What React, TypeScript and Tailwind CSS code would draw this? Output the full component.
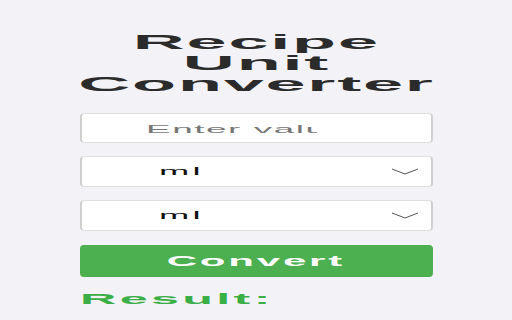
import React from "react";

const font = { fontFamily: '"Liberation Sans", Arial, sans-serif' };

function Chevron() {
  return (
    <svg width="28" height="7" viewBox="0 0 28 7" className="shrink-0">
      <path d="M1 1 L14 6 L27 1" fill="none" stroke="#555" strokeWidth="1" />
    </svg>
  );
}

function UnitSelect({ value }: { value: string }) {
  return (
    <div className="flex h-[31px] items-center justify-between rounded-[4px] border-x-2 border-y border-x-[#cfcfcf] border-y-[#dedede] bg-white pl-[77px] pr-[12px]">
      <span className="inline-block origin-left scale-x-[3.3] text-[11px] leading-none tracking-[1px] text-[#111]">
        {value}
      </span>
      <Chevron />
    </div>
  );
}

export default function App() {
  return (
    <div className="min-h-[320px] w-full bg-[#f2f2f7]" style={font}>
      <div className="mx-auto flex w-[353px] flex-col pt-[32px]">
        <h1 className="text-center text-[20px] font-bold leading-[21px] text-[#2b2b2b]">
          {["Recipe", "Unit", "Converter"].map((line) => (
            <div key={line}>
              <span className="inline-block scale-x-[3.6] tracking-[0.5px]">{line}</span>
            </div>
          ))}
        </h1>

        <div className="mt-[18px] flex h-[30px] items-center rounded-[4px] border-x-2 border-y border-x-[#cfcfcf] border-y-[#dedede] bg-white">
          <div className="ml-[64px] w-[171px] overflow-hidden whitespace-nowrap">
            <span className="inline-block origin-left scale-x-[3.2] text-[11.5px] leading-none tracking-[0.5px] text-[#777]">
              Enter value
            </span>
          </div>
        </div>

        <div className="mt-[13px]">
          <UnitSelect value="ml" />
        </div>
        <div className="mt-[13px]">
          <UnitSelect value="ml" />
        </div>

        <button className="mt-[14px] flex h-[32px] items-center justify-center rounded-[4px] bg-[#4caf50] text-[15px] font-bold text-white">
          <span className="inline-block scale-x-[2.8] tracking-[1px]">Convert</span>
        </button>

        <div className="mt-[13px] text-[15px] font-bold leading-[18px] text-[#3aae47]">
          <span className="inline-block origin-left scale-x-[3.35] tracking-[1px]">Result:</span>
        </div>
      </div>
    </div>
  );
}
